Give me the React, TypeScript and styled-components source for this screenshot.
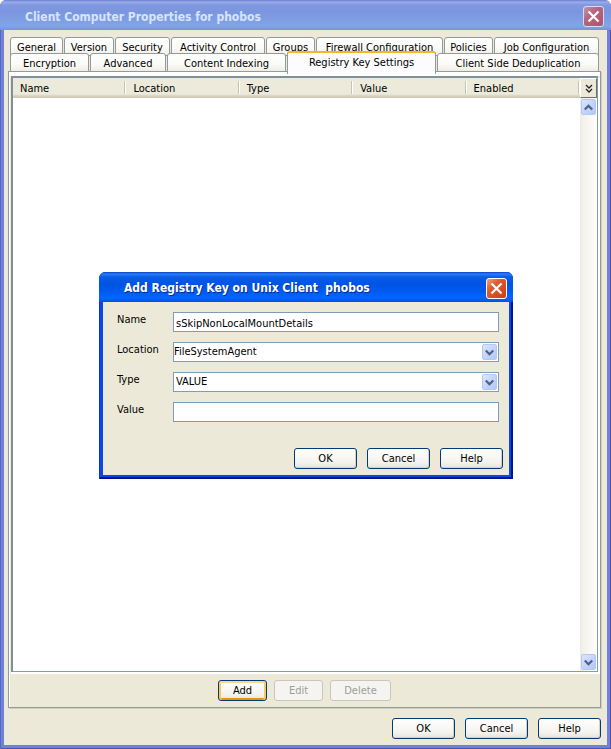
import React from "react";
import styled, { createGlobalStyle, css } from "styled-components";

const UI_FONT = '"DejaVu Sans Condensed", Tahoma, sans-serif';

const GlobalStyle = createGlobalStyle`
  *, *::before, *::after { box-sizing: border-box; }
  html { background: #fff; }
  body { margin: 0; font: 11px/14px ${UI_FONT}; color: #000; }
  button, input, select { font: inherit; color: inherit; margin: 0; padding: 0; }
`;

const Window = styled.main`
  position: relative;
  display: flex;
  flex-direction: column;
  min-height: 100vh;
  padding: 0 4px 4px;
  border-radius: 7px 7px 0 0;
  background: #6f82d8;
  box-shadow: inset 1px 0 #5a65c8, inset -1px -1px #4f50b0;
`;

const TitleBar = styled.header<{ $active?: boolean }>`
  display: flex;
  align-items: center;
  justify-content: space-between;
  height: 30px;
  margin: 0 -4px;
  border-radius: 6px 6px 0 0;
  ${(p) =>
    p.$active
      ? css`
          padding: 2px 6px 0 25px;
          color: #fff;
          background: linear-gradient(#0a3fc4 0, #2a7df5 2px, #0a5ce8 5px, #0054e3 12px, #0058ee 18px, #0066ff 26px, #0050e0 30px);
          text-shadow: 1px 1px #0a2a8c;
        `
      : css`
          padding: 3px 7px 0 25px;
          color: #d8e4f8;
          background: linear-gradient(#6a7ad2 0, #99aee9 2px, #8098e0 5px, #7a96df 12px, #7e9ee3 20px, #82a4e8 26px, #7790dc 30px);
        `}
`;

const Title = styled.h1`
  margin: 0;
  font: bold 12px/18px ${UI_FONT};
  white-space: pre;
`;

const CloseButton = styled.button<{ $active?: boolean }>`
  display: grid;
  place-items: center;
  width: 21px;
  height: 21px;
  border: 1px solid ${(p) => (p.$active ? "#fff" : "#d5dcf4")};
  border-radius: 3px;
  background: ${(p) =>
    p.$active
      ? "linear-gradient(135deg, #f0a084, #e25a32 35%, #cf3c10)"
      : "linear-gradient(135deg, #c795aa, #b8637c 40%, #aa566c)"};
`;

const Body = styled.div`
  flex: 1;
  display: flex;
  flex-direction: column;
  padding: 7px 6px 6px 4px;
  background: #ece9d8;
`;

const TabRow = styled.div<{ $columns: string }>`
  display: grid;
  grid-template-columns: ${(p) => p.$columns};
  column-gap: 1px;
  height: 16px;
  padding: 0 2px;
  & + & { height: 18px; }
`;

const Tab = styled.button<{ $selected?: boolean }>`
  min-width: 0;
  height: 19px;
  border: 1px solid #919b9c;
  border-radius: 3px 3px 0 0;
  background: linear-gradient(#fff, #fafaf7 60%, #efede4);
  line-height: 14px;
  padding-top: 2px;
  white-space: nowrap;
  ${(p) =>
    p.$selected &&
    css`
      z-index: 1;
      height: 23px;
      margin-top: -2px;
      padding: 0 0 2px;
      border-top: 2px solid #f9b528;
      border-bottom: 0;
      background: #fcfcfe;
    `}
`;

const Panel = styled.section`
  flex: 1;
  display: flex;
  flex-direction: column;
  border: 1px solid #919b9c;
  box-shadow: inset 1px 4px #fff, 1px 1px #d0cebf;
  padding: 4px 2px 0;
`;

const ListFrame = styled.div`
  flex: 1;
  display: flex;
  flex-direction: column;
  border-style: solid;
  border-width: 2px 1px 1px 2px;
  border-color: #7f8f9c #7f9db9 #7f9db9 #7f8f9c;
  background: #fff;
  box-shadow: 0 2px #fff, 2px 2px #fff;
`;

const ListHeader = styled.div`
  display: flex;
  height: 20px;
  background: linear-gradient(#ebeadb 0 16px, #e2decd 17px, #d6d2c2 18px, #cbc7b8 20px);
`;

const HeaderTable = styled.table`
  flex: 1;
  width: 100%;
  table-layout: fixed;
  border-collapse: collapse;
`;

const HeaderCell = styled.th`
  height: 20px;
  padding: 2px 0 0 7px;
  font-weight: normal;
  text-align: left;
  background: linear-gradient(#c7c5b2, #c7c5b2) right 1px top 3px / 1px 13px no-repeat,
    linear-gradient(#fff, #fff) right 0 top 3px / 1px 13px no-repeat;
`;

const ColumnsButton = styled.button`
  display: grid;
  place-items: center;
  flex: none;
  width: 17px;
  height: 20px;
  border: 1px solid #fff;
  border-right-color: #716f64;
  border-bottom-color: #716f64;
  background: #ece9d8;
`;

const ListBody = styled.div`
  flex: 1;
  display: flex;
  justify-content: flex-end;
`;

const ScrollTrack = styled.div`
  display: flex;
  flex-direction: column;
  justify-content: space-between;
  width: 17px;
  padding: 1px;
  background: linear-gradient(90deg, #eeede5, #f3f1ec 3px, #fefefb);
`;

const blueFace = css`
  display: grid;
  place-items: center;
  border: 1px solid #b5c8f5;
  border-radius: 2px;
  background: linear-gradient(135deg, #dce6fe, #c4d4fc 50%, #b2c8f8);
`;

const ScrollButton = styled.button`
  ${blueFace}
  width: 15px;
  height: 16px;
`;

const ButtonRow = styled.div<{ $align: string; $gap: number }>`
  display: flex;
  justify-content: ${(p) => p.$align};
  gap: ${(p) => p.$gap}px;
`;

const ListActions = styled(ButtonRow)`
  padding: 8px 0 6px;
`;

const FooterActions = styled(ButtonRow)`
  margin-top: 10px;
`;

const PushButton = styled.button<{ $width: number; $focused?: boolean }>`
  width: ${(p) => p.$width}px;
  height: 21px;
  border: 1px solid #003c74;
  border-radius: 3px;
  background: linear-gradient(#fff, #f4f3ee 70%, #e6e3d9);
  line-height: 14px;
  box-shadow: ${(p) =>
    p.$focused
      ? "inset 0 2px #fdd889, inset 2px 0 #fbc761, inset -2px 0 #fbc761, inset 0 -2px #e59700"
      : "inset -1px -1px #d6d0c5"};
  &:disabled {
    border-color: #c9c7ba;
    background: #f5f4f0;
    box-shadow: none;
    color: #9a9e9b;
  }
`;

const Overlay = styled.div`
  position: absolute;
  inset: 0;
  display: grid;
  place-items: center;
  padding: 2px 0 0 1px;
  pointer-events: none;
  z-index: 2;
`;

const Dialog = styled.section`
  width: 414px;
  max-width: 100%;
  padding: 0 4px 4px;
  border-radius: 7px 7px 0 0;
  background: #0a48e8;
  box-shadow: inset 1px 0 #0831d9, inset -2px -2px #00138c;
  pointer-events: auto;
`;

const DialogBody = styled.form`
  padding: 10px 6px 6px 14px;
  background: #ece9d8;
`;

const Field = styled.div`
  display: grid;
  grid-template-columns: 56px 1fr;
  margin: 0 4px 10px 0;
`;

const FieldLabel = styled.label`
  line-height: 15px;
`;

const boxStyle = css`
  width: 100%;
  height: 20px;
  border: 1px solid #7f9db9;
  border-radius: 0;
  background: #fff;
  outline: none;
`;

const TextBox = styled.input`
  ${boxStyle}
  padding: 2px 2px 0;
`;

const Picker = styled.div`
  display: grid;
  align-items: center;
  & > * { grid-area: 1 / 1; }
`;

const Select = styled.select<{ $indent: number }>`
  ${boxStyle}
  appearance: none;
  padding-left: ${(p) => p.$indent}px;
`;

const PickerArrow = styled.span`
  ${blueFace}
  justify-self: end;
  width: 15px;
  height: 16px;
  margin-right: 2px;
  pointer-events: none;
`;

const DialogActions = styled(ButtonRow)`
  margin-top: 26px;
`;

const CloseIcon = () => (
  <svg width="13" height="13" viewBox="0 0 13 13" aria-hidden="true">
    <path d="M1.5 1.5 11.5 11.5M11.5 1.5 1.5 11.5" stroke="#fff" strokeWidth="2.2" />
  </svg>
);

const Chevron = ({ up }: { up?: boolean }) => (
  <svg width="9" height="7" viewBox="0 0 9 7" aria-hidden="true">
    <path d={up ? "M.8 5.5 4.5 1.8 8.2 5.5" : "M.8 1.5 4.5 5.2 8.2 1.5"} fill="none" stroke="#4d6185" strokeWidth="2.2" />
  </svg>
);

const DoubleChevron = () => (
  <svg width="8" height="9" viewBox="0 0 8 9" aria-hidden="true">
    <path d="M1 1 4 4 7 1M1 5 4 8 7 5" fill="none" stroke="#222" strokeWidth="1.3" />
  </svg>
);

const BACK_TABS = ["General", "Version", "Security", "Activity Control", "Groups", "Firewall Configuration", "Policies", "Job Configuration"];
const FRONT_TABS = ["Encryption", "Advanced", "Content Indexing", "Registry Key Settings", "Client Side Deduplication"];
const COLUMNS = ["Name", "Location", "Type", "Value", "Enabled"];

export default function App() {
  return (
    <>
      <GlobalStyle />
      <Window>
        <TitleBar>
          <Title>Client Computer Properties for phobos</Title>
          <CloseButton aria-label="Close"><CloseIcon /></CloseButton>
        </TitleBar>
        <Body>
          <TabRow role="tablist" $columns="53fr 50fr 55fr 94fr 49fr 127fr 49fr 105fr">
            {BACK_TABS.map((t) => <Tab key={t} role="tab">{t}</Tab>)}
          </TabRow>
          <TabRow role="tablist" $columns="79fr 76fr 119fr 149fr 162fr">
            {FRONT_TABS.map((t) => (
              <Tab key={t} role="tab" $selected={t === "Registry Key Settings"} aria-selected={t === "Registry Key Settings"}>{t}</Tab>
            ))}
          </TabRow>
          <Panel>
            <ListFrame>
              <ListHeader>
                <HeaderTable>
                  <thead>
                    <tr>{COLUMNS.map((c) => <HeaderCell key={c} scope="col">{c}</HeaderCell>)}</tr>
                  </thead>
                </HeaderTable>
                <ColumnsButton aria-label="Choose columns"><DoubleChevron /></ColumnsButton>
              </ListHeader>
              <ListBody>
                <ScrollTrack>
                  <ScrollButton aria-label="Scroll up"><Chevron up /></ScrollButton>
                  <ScrollButton aria-label="Scroll down"><Chevron /></ScrollButton>
                </ScrollTrack>
              </ListBody>
            </ListFrame>
            <ListActions $align="center" $gap={7}>
              <PushButton $width={49} $focused>Add</PushButton>
              <PushButton $width={49} disabled>Edit</PushButton>
              <PushButton $width={61} disabled>Delete</PushButton>
            </ListActions>
          </Panel>
          <FooterActions $align="flex-end" $gap={10}>
            <PushButton $width={63}>OK</PushButton>
            <PushButton $width={63}>Cancel</PushButton>
            <PushButton $width={63}>Help</PushButton>
          </FooterActions>
        </Body>
        <Overlay>
          <Dialog role="dialog" aria-labelledby="dialog-title">
            <TitleBar $active>
              <Title as="h2" id="dialog-title">{"Add Registry Key on Unix Client  phobos"}</Title>
              <CloseButton $active aria-label="Close dialog"><CloseIcon /></CloseButton>
            </TitleBar>
            <DialogBody onSubmit={(e) => e.preventDefault()}>
              <Field>
                <FieldLabel htmlFor="key-name">Name</FieldLabel>
                <TextBox id="key-name" defaultValue="sSkipNonLocalMountDetails" />
              </Field>
              <Field>
                <FieldLabel htmlFor="key-location">Location</FieldLabel>
                <Picker>
                  <Select id="key-location" $indent={0}><option>FileSystemAgent</option></Select>
                  <PickerArrow><Chevron /></PickerArrow>
                </Picker>
              </Field>
              <Field>
                <FieldLabel htmlFor="key-type">Type</FieldLabel>
                <Picker>
                  <Select id="key-type" $indent={2}><option>VALUE</option></Select>
                  <PickerArrow><Chevron /></PickerArrow>
                </Picker>
              </Field>
              <Field>
                <FieldLabel htmlFor="key-value">Value</FieldLabel>
                <TextBox id="key-value" />
              </Field>
              <DialogActions $align="flex-end" $gap={10}>
                <PushButton $width={63}>OK</PushButton>
                <PushButton $width={63} type="button">Cancel</PushButton>
                <PushButton $width={63} type="button">Help</PushButton>
              </DialogActions>
            </DialogBody>
          </Dialog>
        </Overlay>
      </Window>
    </>
  );
}
